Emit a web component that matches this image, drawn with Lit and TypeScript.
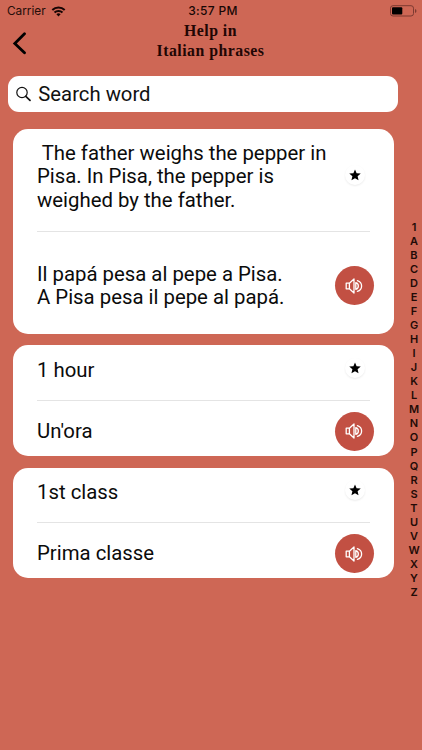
import { LitElement, html, css } from "lit";
import { customElement, property } from "lit/decorators.js";

@customElement("phrase-card")
class PhraseCard extends LitElement {
  @property() source = "";
  @property() translation = "";
  @property({ type: Boolean, reflect: true }) tall = false;

  static styles = css`
    :host {
      display: block;
      box-sizing: border-box;
      width: 381.5px;
      height: 110.3px;
      padding: 0 24.5px;
      border-radius: 15px;
      background: #fff;
      color: #0b0b0b;
      font: 20.35px/23.7px Roboto, sans-serif;
    }
    :host([tall]) { height: 205px; }
    .row {
      display: flex;
      align-items: center;
      justify-content: space-between;
      box-sizing: border-box;
    }
    .text { white-space: pre; padding-top: 1.2px; }
    .top { height: 55.5px; border-bottom: 1.5px solid #e4e4e4; padding-bottom: 5px; }
    .bottom { height: 54.8px; padding-top: 6px; }
    :host([tall]) .top { height: 103.3px; padding-bottom: 6px; }
    :host([tall]) .bottom { height: 101.7px; padding-top: 6px; }
    .star, .speaker {
      display: flex;
      flex: none;
      align-items: center;
      justify-content: center;
      border-radius: 50%;
    }
    .star {
      width: 20px;
      height: 20px;
      margin-right: 5px;
      margin-top: -4px;
      background: #fff;
      box-shadow: 0 1px 2px #00000014;
    }
    :host([tall]) .star { margin-top: -3px; }
    .speaker {
      width: 39.2px;
      height: 39.2px;
      margin-right: -4.3px;
      background: #c25043;
    }
    svg { display: block; }
  `;

  render() {
    return html`
      <div class="row top">
        <span class="text">${this.source}</span>
        <span class="star"><svg width="12" height="12" viewBox="0 0 24 24"><path d="M12 .8l3.2 7.7 8.3.7-6.3 5.4 1.9 8.1-7.1-4.3-7.1 4.3 1.9-8.1L.5 9.2l8.3-.7z"/></svg></span>
      </div>
      <div class="row bottom">
        <span class="text">${this.translation}</span>
        <span class="speaker">
          <svg width="18" height="16" viewBox="0 0 18 16" fill="none" stroke="#fff" stroke-width="1.3" stroke-linejoin="round" stroke-linecap="round">
            <path d="M1.2 5.2h3.2L9 1v14l-4.600-4.200H1.200zM4.400 5.200v5.600"/>
            <path d="M10.800 4.600c3.400 1 3.400 5.800 0 6.800zM12.400 2.600c5.600 1.600 5.600 9.200 0 10.800"/>
          </svg>
        </span>
      </div>`;
  }
}

@customElement("app-root")
class AppRoot extends LitElement {
  static styles = css`
    :host {
      display: flex;
      flex-direction: column;
      position: relative;
      box-sizing: border-box;
      width: 422px;
      height: 750px;
      overflow: hidden;
      background: #ce6755;
      color: #000;
      font-family: Inter, sans-serif;
    }
    svg { display: block; }
    .status {
      display: grid;
      grid-template-columns: 1fr auto 1fr;
      align-items: center;
      height: 22px;
      padding: 0 5px 0 7px;
      font-size: 12px;
      line-height: 22px;
    }
    .carrier { display: flex; align-items: center; gap: 5px; color: #260d09; font-size: 11.8px; }
    .time { font-weight: 500; letter-spacing: .3px; color: #170705; padding-left: 2px; }
    .battery { justify-self: end; }
    .header {
      display: grid;
      grid-template-columns: 40px 1fr 40px;
      height: 53.7px;
    }
    .back { padding: 10px 0 0 12px; }
    .title {
      text-align: center;
      font: 700 15.8px/20px "Liberation Serif", serif;
      letter-spacing: .5px;
      margin: -1.5px 0 0 -1px;
      color: #210604;
    }
    .search {
      display: flex;
      align-items: center;
      box-sizing: border-box;
      width: 390px;
      height: 36.7px;
      margin-left: 8.3px;
      padding-left: 8px;
      gap: 7px;
      border-radius: 11px;
      background: #fff;
      color: #111;
      font: 20.3px/24px Roboto, sans-serif;
    }
    .list { display: flex; flex-direction: column; gap: 11.9px; margin: 16.2px 0 0 12.5px; }
    .index {
      position: absolute;
      top: 220px;
      right: 0;
      width: 16px;
      display: flex;
      flex-direction: column;
      align-items: center;
      font-size: 11px;
      font-weight: 600;
      line-height: 14.03px;
      color: #230b07;
    }
  `;

  render() {
    return html`
      <div class="status">
        <div class="carrier">
          <span>Carrier</span>
          <svg width="15" height="11" viewBox="0 0 14 11" fill="none" stroke="#160504" stroke-width="2">
            <path d="M.8 4a9 9 0 0 1 12.4 0M3 6.5a5.8 5.8 0 0 1 8 0"/>
            <path d="M7 10.5L4.9 8.3a3 3 0 0 1 4.2 0z" fill="#160504" stroke="none"/>
          </svg>
        </div>
        <div class="time">3:57 PM</div>
        <svg class="battery" width="27" height="12" viewBox="0 0 27 12">
          <rect x=".5" y=".7" width="23" height="10.3" rx="2.5" fill="none" stroke="#7d3a31"/>
          <rect x="2" y="2.2" width="10.3" height="7.3" rx="1"/>
          <path d="M25 4v4c2-.8 2-3.2 0-4z" fill="#7d3a31"/>
        </svg>
      </div>
      <div class="header">
        <div class="back">
          <svg width="15" height="23" viewBox="0 0 15 23" fill="none" stroke="#000" stroke-width="2.8" stroke-linecap="round"><path d="M12.5 1.8L2.8 11.4l9.7 9.4"/></svg>
        </div>
        <div class="title">Help in<br>Italian phrases</div>
      </div>
      <div class="search">
        <svg width="15" height="16" viewBox="0 0 15 16" fill="none" stroke="#111" stroke-width="1.2" stroke-linecap="round"><circle cx="6" cy="6.5" r="5.2"/><path d="M9.8 10.3l4.2 4" stroke-width="1.7"/></svg>
        <span>Search word</span>
      </div>
      <div class="list">
        <phrase-card tall .source=${" The father weighs the pepper in\nPisa. In Pisa, the pepper is\nweighed by the father."} .translation=${"Il papá pesa al pepe a Pisa.\nA Pisa pesa il pepe al papá."}></phrase-card>
        <phrase-card .source=${"1 hour"} .translation=${"Un'ora"}></phrase-card>
        <phrase-card .source=${"1st class"} .translation=${"Prima classe"}></phrase-card>
      </div>
      <div class="index">${[..."1ABCDEFGHIJKLMNOPQRSTUVWXYZ"].map((c) => html`<span>${c}</span>`)}</div>
    `;
  }
}
